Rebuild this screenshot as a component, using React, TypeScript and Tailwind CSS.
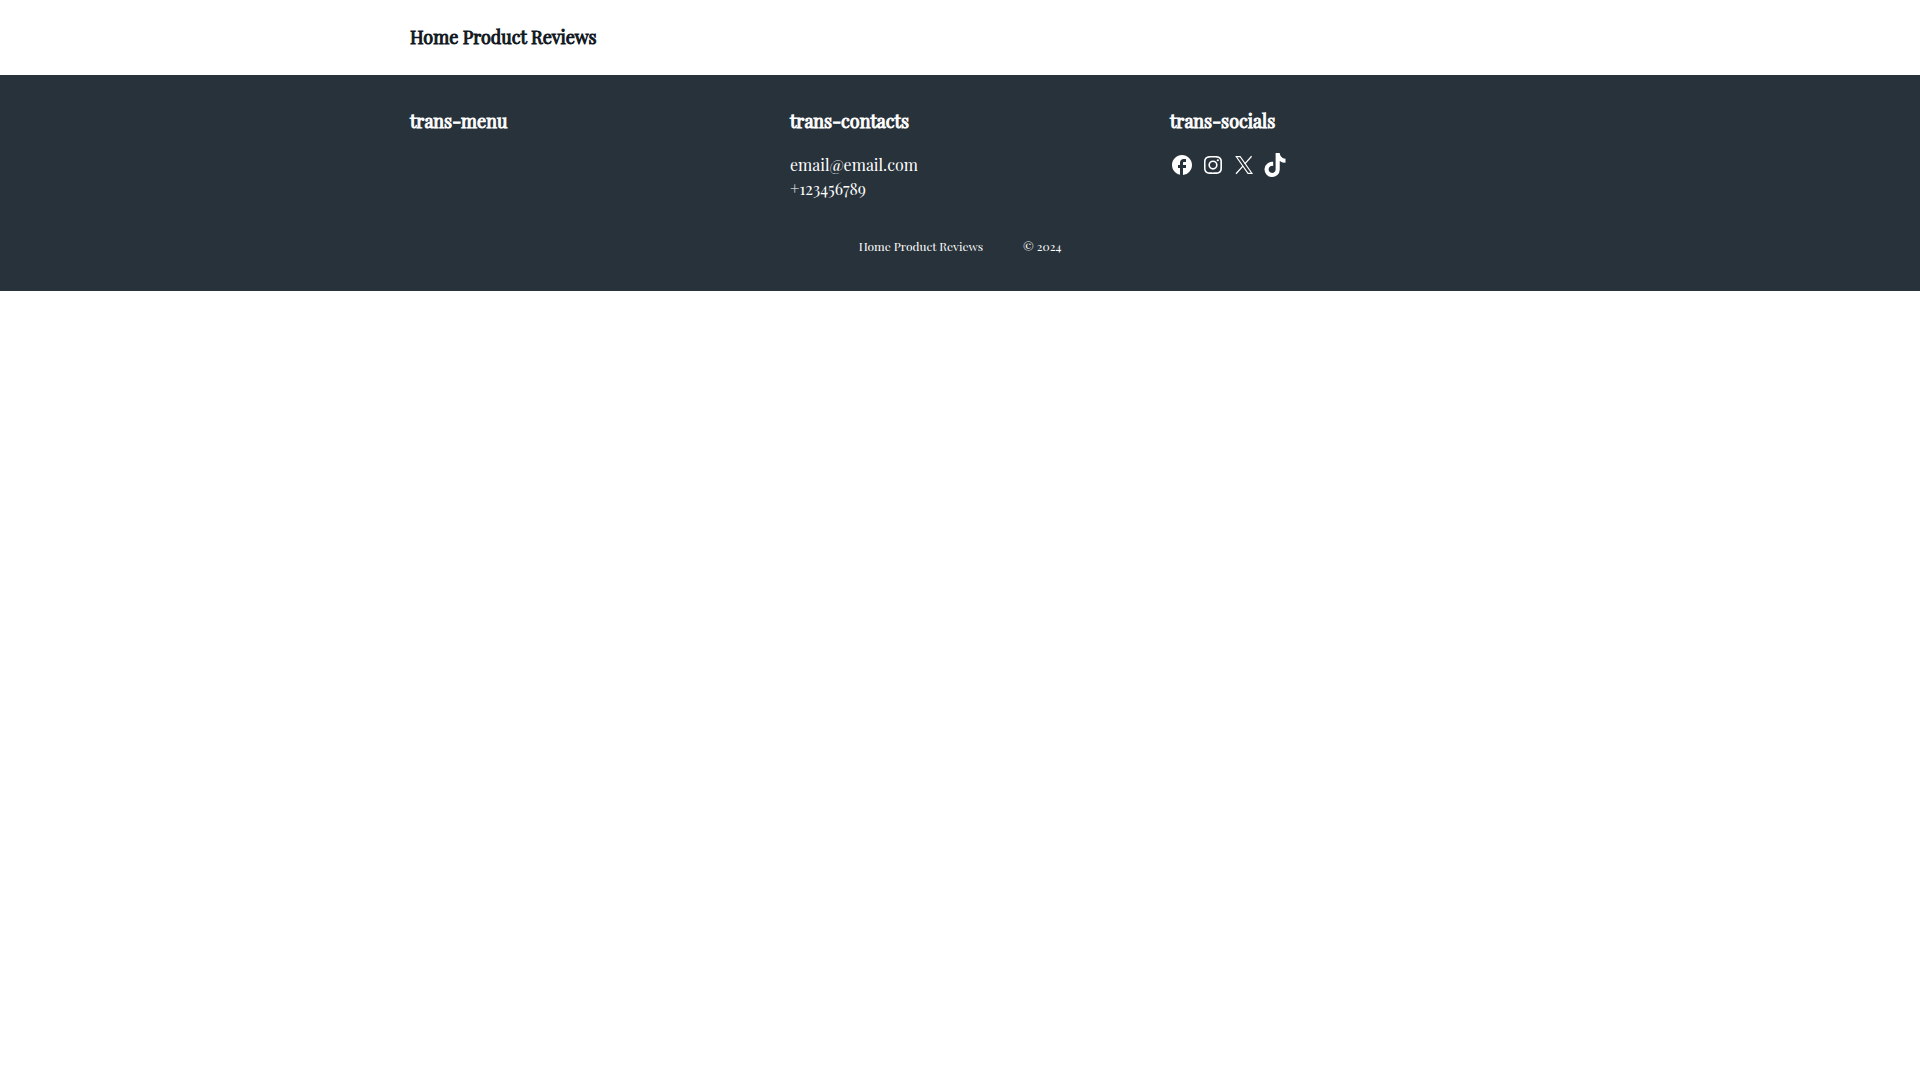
import React from 'react';
import { BiLogoInstagram } from 'react-icons/bi';
import { FaTiktok } from 'react-icons/fa6';
import { MdFacebook } from 'react-icons/md';

const SITE_NAME = 'Home Product Reviews';

const XLogo: React.FC = () => (
  <svg width={24} height={24} viewBox="0 0 24 24" fill="none" stroke="currentColor" aria-hidden="true">
    <path d="M4.2 3.6h4L20 20.4h-4z" strokeWidth="1.1" />
    <path d="M19.6 3.2l-6.8 7.7M10.9 13.1l-6.9 7.7" strokeWidth="1.3" />
  </svg>
);

const socials = [
  { label: 'Facebook', icon: <MdFacebook size={24} /> },
  { label: 'Instagram', icon: <BiLogoInstagram size={24} /> },
  { label: 'X', icon: <XLogo /> },
  { label: 'TikTok', icon: <FaTiktok size={24} /> },
];

interface FooterColumnProps {
  title: string;
  children?: React.ReactNode;
}

const FooterColumn: React.FC<Readonly<FooterColumnProps>> = ({ title, children }) => (
  <div>
    <h3 className="mb-[18px] text-lg leading-7 font-normal [-webkit-text-stroke:1px]">{title}</h3>
    {children}
  </div>
);

export default function App() {
  return (
    <div className="bg-white font-['Playfair_Display','Liberation_Serif',serif] text-[#10171e]">
      <header className="mx-auto max-w-[1140px] px-5 py-6">
        <a href="#" className="block text-lg leading-[27px] font-normal [-webkit-text-stroke:1px]">{SITE_NAME}</a>
      </header>

      <footer className="bg-[#28323a] py-8 text-white">
        <div className="mx-auto max-w-[1140px] px-5">
          <div className="grid gap-10 md:grid-cols-3">
            <FooterColumn title="trans-menu" />
            <FooterColumn title="trans-contacts">
              <div className="flex flex-col items-start text-base leading-6">
                <a href="mailto:email@email.com">email@email.com</a>
                <a href="tel:+123456789">+123456789</a>
              </div>
            </FooterColumn>
            <FooterColumn title="trans-socials">
              <div className="flex gap-[7px]">
                {socials.map(({ label, icon }) => (
                  <a key={label} href="#" aria-label={label}>{icon}</a>
                ))}
              </div>
            </FooterColumn>
          </div>
          <div className="mt-8 flex justify-center gap-10 text-xs leading-[26px]">
            <span>{SITE_NAME}</span>
            <span>© 2024</span>
          </div>
        </div>
      </footer>
    </div>
  );
}
